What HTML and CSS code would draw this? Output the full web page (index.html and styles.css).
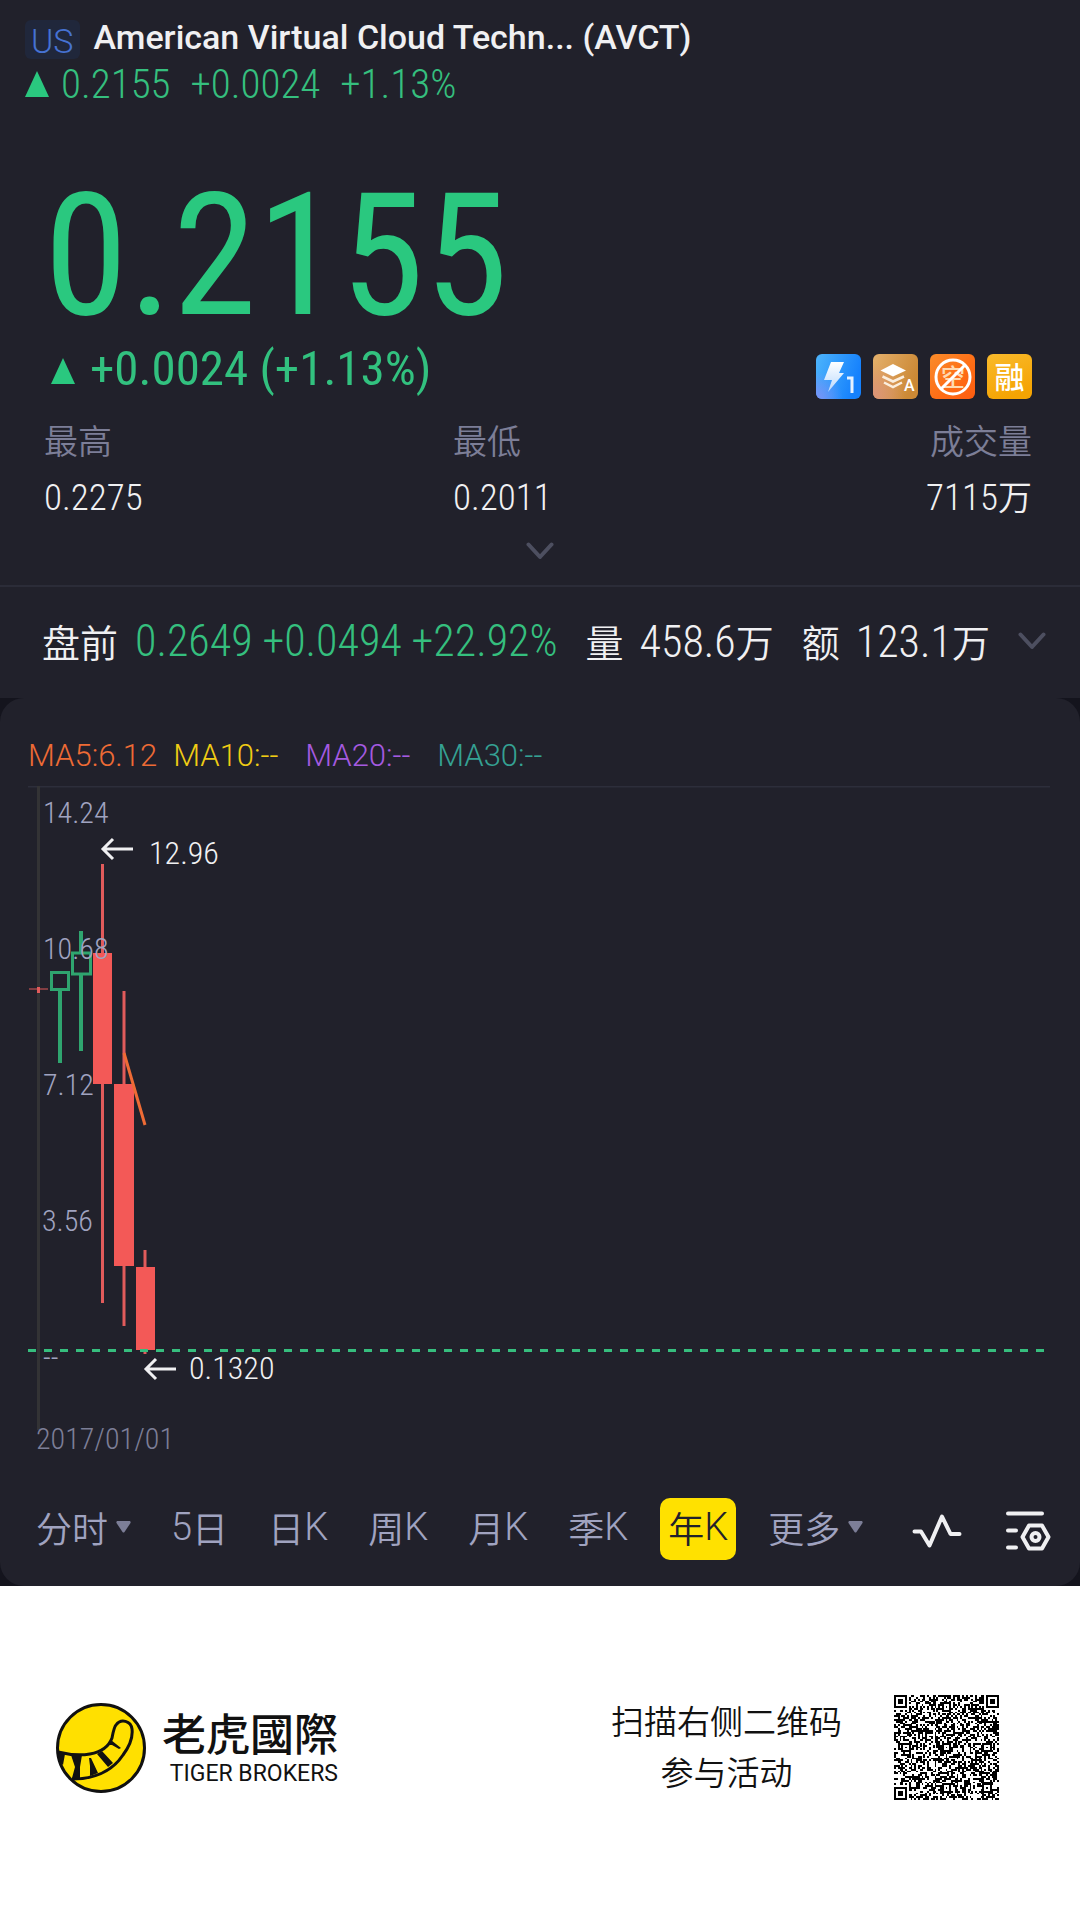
FILE: index.html
```
<!DOCTYPE html>
<html lang="zh-CN">
<head>
<meta charset="utf-8">
<meta name="viewport" content="width=device-width, initial-scale=1">
<title>American Virtual Cloud Techn... (AVCT)</title>
<link rel="stylesheet" href="styles.css">
</head>
<body>
<main class="app">
  <header class="topbar">
    <div class="name-row">
      <span class="market">US</span>
      <h1 class="name">American Virtual Cloud Techn... (AVCT)</h1>
    </div>
    <div class="mini-quote">
      <svg class="mini-arrow" viewBox="0 0 24 26" aria-hidden="true"><path d="M12 0 24 26H0Z"/></svg>
      <span>0.2155</span><span>+0.0024</span><span>+1.13%</span>
    </div>
  </header>

  <section class="quote">
    <p class="price">0.2155</p>
    <div class="change-row">
      <p class="change">
        <svg class="arrow" viewBox="0 0 24 26" aria-hidden="true"><path d="M12 0 24 26H0Z"/></svg>
        <span>+0.0024 (+1.13%)</span>
      </p>
      <div class="tags">
        <svg class="tag" viewBox="0 0 45 45" role="img" aria-label="Level 1">
          <defs>
            <linearGradient id="blue" x1="0" y1="0" x2="1" y2="0.3"><stop offset="0" stop-color="#4db4fb"/><stop offset="1" stop-color="#1581fd"/></linearGradient>
            <radialGradient id="violet" cx="0" cy="1" r="0.6"><stop offset="0" stop-color="#7d92f7"/><stop offset="1" stop-color="#7d92f7" stop-opacity="0"/></radialGradient>
            <linearGradient id="bolt" x1="0" y1="0" x2="0" y2="1"><stop offset="0" stop-color="#fff"/><stop offset="1" stop-color="#b9d9fd"/></linearGradient>
          </defs>
          <rect width="45" height="45" rx="6" fill="url(#blue)"/><rect width="45" height="45" rx="6" fill="url(#violet)"/>
          <path d="M15 8h13l-5 11h5L12 38l4-12H8Z" fill="url(#bolt)"/>
          <path d="M31 24h5v15" fill="none" stroke="#e6f1ff" stroke-width="3"/>
        </svg>
        <svg class="tag" viewBox="0 0 45 45" role="img" aria-label="A">
          <defs>
            <linearGradient id="tan" x1="0" y1="0" x2="1" y2="0.4"><stop offset="0" stop-color="#e4b06c"/><stop offset="1" stop-color="#cc8935"/></linearGradient>
            <radialGradient id="rose" cx="0" cy="0.9" r="0.7"><stop offset="0" stop-color="#dc9478"/><stop offset="1" stop-color="#dc9478" stop-opacity="0"/></radialGradient>
          </defs>
          <rect width="45" height="45" rx="6" fill="url(#tan)"/><rect width="45" height="45" rx="6" fill="url(#rose)"/>
          <path d="M20 10 33 16.500 20 22.500 7.500 16.500Z" fill="#fff"/>
          <path d="M9.500 22.500 20 27.500 31 22.500M11 28.500 20 33 29 28.500" fill="none" stroke="#fbeede" stroke-width="2.500"/>
          <text class="tag-letter" x="31" y="37">A</text>
        </svg>
        <svg class="tag" viewBox="0 0 45 45" role="img" aria-label="空">
          <defs><linearGradient id="orange" x1="0" y1="0" x2="1" y2="1"><stop offset="0" stop-color="#fa8c2a"/><stop offset="0.6" stop-color="#fe6c15"/><stop offset="1" stop-color="#fe5c10"/></linearGradient></defs>
          <rect width="45" height="45" rx="6" fill="url(#orange)"/>
          <text class="tag-han faint" x="23" y="32">空</text>
          <circle cx="23" cy="23" r="17" fill="none" stroke="#fff" stroke-width="3"/>
          <path d="M11 35 35 11" stroke="#fff" stroke-width="3"/>
        </svg>
        <svg class="tag" viewBox="0 0 45 45" role="img" aria-label="融">
          <defs><linearGradient id="gold" x1="0" y1="0" x2="0.4" y2="1"><stop offset="0" stop-color="#f9ba2c"/><stop offset="1" stop-color="#f5a403"/></linearGradient></defs>
          <rect width="45" height="45" rx="6" fill="url(#gold)"/>
          <text class="tag-han big" x="22.500" y="34">融</text>
        </svg>
      </div>
    </div>
    <dl class="stats">
      <div><dt>最高</dt><dd>0.2275</dd></div>
      <div><dt>最低</dt><dd>0.2011</dd></div>
      <div class="end"><dt>成交量</dt><dd>7115<span class="unit">万</span></dd></div>
    </dl>
    <button class="expand" aria-label="展开"><svg class="chevron" viewBox="0 0 28 18" aria-hidden="true"><path d="M2.500 2.500 14 15 25.500 2.500"/></svg></button>
  </section>

  <section class="premarket">
    <span class="han">盘前</span>
    <span class="up">0.2649 +0.0494 +22.92%</span>
    <span class="pair"><span class="han label">量</span>458.6<span class="han">万</span></span>
    <span class="pair"><span class="han label">额</span>123.1<span class="han">万</span></span>
    <button class="more" aria-label="展开"><svg class="chevron" viewBox="0 0 28 18" aria-hidden="true"><path d="M2.500 2.500 14 15 25.500 2.500"/></svg></button>
  </section>

  <div class="panel-wrap">
  <section class="panel">
    <div class="ma">
      <span class="ma5">MA5:6.12</span><span class="ma10">MA10:--</span><span class="ma20">MA20:--</span><span class="ma30">MA30:--</span>
    </div>
    <svg class="chart" viewBox="0 0 1080 672" role="img" aria-label="年K">
      <path class="grid" d="M28 0.500H1050"/>
      <path class="axis" d="M38.500 0V644"/>
      <!-- yearly candles, oldest first -->
      <g class="down">
        <path class="thin" d="M29 203H48"/><path d="M38.500 201V207"/>
      </g>
      <g class="rise">
        <path d="M60 205V277M81 145V166M81 189V265"/>
        <rect x="51.500" y="186.500" width="17" height="17"/><rect x="72.500" y="167" width="18" height="21"/>
      </g>
      <g class="down">
        <path d="M102.500 78V517M124 205V540M145 464V568"/>
        <rect x="93" y="167" width="19" height="131"/><rect x="114" y="298" width="20" height="182"/><rect x="136" y="481" width="19" height="83"/>
      </g>
      <path class="ma-line" d="M124 267 145 339"/>
      <path class="last" d="M28 564.500H1045"/>
      <g class="scale">
        <text x="43" y="37">14.24</text><text x="43" y="173">10.68</text><text x="43" y="309">7.12</text><text x="42" y="445">3.56</text><text x="43" y="582">--</text>
      </g>
      <text class="date" x="36" y="663">2017/01/01</text>
      <g class="mark">
        <path d="M133 63H103M113 53 103 63 113 73"/><text x="149" y="78">12.96</text>
        <path d="M176 583H146M156 573 146 583 156 593"/><text x="189" y="593">0.1320</text>
      </g>
    </svg>
    <nav class="toolbar">
      <div class="tabs">
        <button class="tab">分时<svg class="caret" viewBox="0 0 15 12" aria-hidden="true"><path d="M1 0h13q1 1 .5 2L8.500 11q-1 1-2 0L.5 2Q0 1 1 0Z"/></svg></button>
        <button class="tab"><span class="lat">5</span>日</button>
        <button class="tab">日<span class="lat">K</span></button>
        <button class="tab">周<span class="lat">K</span></button>
        <button class="tab">月<span class="lat">K</span></button>
        <button class="tab">季<span class="lat">K</span></button>
        <button class="tab active" aria-pressed="true">年<span class="lat">K</span></button>
        <button class="tab">更多<svg class="caret" viewBox="0 0 15 12" aria-hidden="true"><path d="M1 0h13q1 1 .5 2L8.500 11q-1 1-2 0L.5 2Q0 1 1 0Z"/></svg></button>
      </div>
      <div class="tools">
        <button class="tool" aria-label="指标"><svg viewBox="0 0 50 40" aria-hidden="true"><path d="M2.500 20.500H9L17.500 34.500 30 5.500 38.500 23H47.500"/></svg></button>
        <button class="tool" aria-label="设置"><svg viewBox="0 0 46 44" aria-hidden="true"><path d="M3 4.500H37M3 21.500H11M3 38.500H11M24 16.500H37L43.500 28 37 39.500H24L17.500 28Z"/><circle cx="30.500" cy="28" r="4"/></svg></button>
      </div>
    </nav>
  </section>
  </div>

  <footer class="footer">
    <svg class="logo" viewBox="0 0 90 90" aria-hidden="true">
      <circle cx="45" cy="45" r="43.500" fill="#ffe000" stroke="#111" stroke-width="3"/>
      <path d="M2 49C22 54 49 54 56 35C57 30 58 24 60 22C65 15 75 18 76 26C77 34 73 44 67 52C57 67 40 76 16 76" fill="none" stroke="#111" stroke-width="3"/>
      <path d="M3 49 9 51 7 62 2 58ZM15 52 26 52 24 64 24 76 16 75 19 64ZM33 55 35 55 42 70 34 73 34 63ZM41 51 46 48 57 60 52 64ZM52 42 55 37 65 45 63 46 56 42Z" fill="#111"/>
    </svg>
    <div class="brand">
      <strong lang="zh-TW">老虎國際</strong>
      <span>TIGER BROKERS</span>
    </div>
    <p class="scan">扫描右侧二维码<br>参与活动</p>
    <svg class="qr" viewBox="0 0 57 57" shape-rendering="crispEdges" role="img" aria-label="二维码"><path id="modules"/></svg>
  </footer>
</main>
<script src="qr.js"></script>
</body>
</html>
```
FILE: qr.js
```
// Fills the 57x57 code: finder, timing and alignment patterns, then data modules.
(function () {
  var size = 57, seed = 20170101, d = '';
  function next() {
    seed = (seed * 1103515245 + 12345) % 2147483648;
    return seed / 2147483648;
  }
  function ring(x, y, cx, cy) {
    return Math.max(Math.abs(x - cx), Math.abs(y - cy));
  }
  var finders = [[3, 3], [53, 3], [3, 53]];
  var marks = [[28, 6], [6, 28], [28, 28], [50, 28], [28, 50], [50, 50]];
  for (var y = 0; y < size; y++) {
    for (var x = 0; x < size; x++) {
      var on = next() < 0.5;
      if (x === 6 || y === 6) on = (x + y) % 2 === 0;
      marks.forEach(function (m) {
        var r = ring(x, y, m[0], m[1]);
        if (r <= 2) on = r !== 1;
      });
      finders.forEach(function (f) {
        var r = ring(x, y, f[0], f[1]);
        if (r <= 4) on = r !== 2 && r !== 4;
      });
      if (on) d += 'M' + x + ' ' + y + 'h1v1h-1z';
    }
  }
  document.getElementById('modules').setAttribute('d', d);
})();
```
FILE: styles.css
```
* { box-sizing: border-box; }

body, h1, p, dl, dd { margin: 0; }

body {
  background: #fff;
  font-family: "Roboto Condensed", "Noto Sans CJK SC DemiLight", "Noto Sans CJK SC", sans-serif;
  font-weight: 400;
}

button {
  border: 0;
  padding: 0;
  background: none;
  color: inherit;
  font: inherit;
}

svg { display: block; }

.app { background: #21212b; color: #f0f0f2; }

.topbar { padding: 20px 25px 0; }

.name-row { display: flex; align-items: center; gap: 14px; height: 39px; }

.market {
  height: 39px;
  padding: 0 6px;
  border-radius: 6px;
  background: #20273b;
  color: #4672d2;
  font: 300 34px/42px Roboto, sans-serif;
}

.name { font: 500 34px/40px Roboto, sans-serif; padding-bottom: 5px; }

.mini-quote {
  display: flex;
  align-items: center;
  gap: 20px;
  margin-top: 4px;
  color: #35bf7e;
  font-weight: 300;
  font-size: 41px;
  line-height: 42px;
}

.mini-arrow { width: 24px; height: 26px; margin-right: -8px; fill: #2ac87f; }

.quote { padding: 0 44px; border-bottom: 2px solid #2b2c38; }

.price {
  margin-top: 56px;
  color: #2ac87f;
  font-size: 170px;
  font-weight: 400;
  line-height: 190px;
}

.change-row { display: flex; justify-content: space-between; align-items: flex-end; height: 48px; }

.change {
  display: flex;
  align-items: center;
  gap: 15px;
  padding-left: 7px;
  color: #32c17f;
  font-size: 49px;
  font-weight: 400;
  line-height: 60px;
}

.arrow { width: 24px; height: 26px; margin-top: 4px; fill: #2ac87f; }

.tags { display: flex; gap: 12px; margin-right: 4px; }

.tag { width: 45px; height: 45px; }

.tag-letter { fill: #fff; font: 500 16px Roboto, sans-serif; }

.tag-han { fill: #fff; font: 500 24px "Noto Sans CJK SC", sans-serif; text-anchor: middle; }

.tag-han.big { font-size: 30px; }

.tag-han.faint { fill: #ffd9b0; }

.stats { display: grid; grid-template-columns: 409px 1fr auto; margin-top: 21px; }

.stats dt { color: #7c7e97; font-size: 34px; line-height: 44px; }

.stats dd { margin-top: 12px; font-size: 37px; font-weight: 300; line-height: 44px; }

.end { margin-right: 4px; text-align: right; }

.unit { font-size: 34px; }

.expand { display: block; margin: 22px auto 25px; }

.chevron {
  width: 28px;
  height: 18px;
  fill: none;
  stroke: #4d4f60;
  stroke-width: 4px;
  stroke-linecap: round;
  stroke-linejoin: round;
}

.premarket {
  display: flex;
  align-items: center;
  height: 111px;
  padding: 0 34px 4px 42px;
  font-size: 44px;
  font-weight: 300;
}

.han { font-size: 38px; }

.label { margin-right: 16px; }

.up { margin-left: 17px; color: #35bf7e; }

.pair { margin-left: 28px; }

.more { margin-left: auto; }

.panel-wrap { background: #14141d; }

.panel { border-radius: 24px; background: #21212b; }

.ma {
  display: flex;
  gap: 16px;
  height: 88px;
  padding: 38px 28px 0;
  font: 300 31px/40px Roboto, sans-serif;
}

.ma span { min-width: 116px; }

.ma5 { color: #ee6b35; }
.ma10 { color: #f0cc14; }
.ma20 { color: #a55ae0; }
.ma30 { color: #35a193; }

.chart { width: 100%; height: auto; }

.grid { stroke: #2d2e3b; stroke-width: 2px; }
.axis { stroke: #333335; stroke-width: 3px; }

.down path { stroke: #e15b5b; stroke-width: 3px; }
.down .thin { stroke-width: 1px; }
.down rect { fill: #f35957; }

.rise path { stroke: #2fa56f; stroke-width: 4px; }
.rise rect { fill: none; stroke: #2fa56f; stroke-width: 3px; }

.ma-line { stroke: #ee6b35; stroke-width: 3px; }
.last { stroke: #36be7e; stroke-width: 3px; stroke-dasharray: 8 8; }

.scale, .date { fill: #a0a3c0; font-size: 30px; font-weight: 300; }
.date { fill: #7c7e97; }

.mark path { fill: none; stroke: #f0f0f2; stroke-width: 3px; }
.mark text { fill: #f0f0f2; font-size: 32px; font-weight: 300; }

.toolbar {
  display: flex;
  align-items: center;
  justify-content: space-between;
  height: 128px;
  padding: 14px 27px 0 28px;
}

.tabs { display: flex; gap: 24px; }

.tab {
  display: flex;
  align-items: center;
  height: 62px;
  padding: 0 8px 4px;
  border-radius: 10px;
  color: #a0a3c0;
  font-size: 36px;
}

.tab.active { background: #ffe100; color: #21212b; }

.lat { font-family: Roboto, sans-serif; font-weight: 300; font-size: 38px; }

.caret { width: 15px; height: 12px; margin-left: 8px; fill: #7c7e97; }

.tools { display: flex; gap: 41px; padding-top: 4px; }

.tool svg {
  width: 50px;
  height: 44px;
  fill: none;
  stroke: #f0f0f2;
  stroke-width: 4px;
  stroke-linecap: round;
  stroke-linejoin: round;
}

.footer {
  display: flex;
  align-items: center;
  height: 323px;
  padding: 0 81px 0 56px;
  background: #fff;
  color: #111;
}

.logo { width: 90px; height: 90px; }

.brand { display: flex; flex-direction: column; margin-left: 16px; text-align: right; }

.brand strong { font: 500 44px/52px "Noto Sans CJK TC", sans-serif; }

.brand span { font: 400 23px/32px Roboto, sans-serif; }

.scan { margin-left: auto; font-size: 33px; line-height: 51px; text-align: center; }

.qr { width: 105px; height: 105px; margin-left: 52px; }
```
